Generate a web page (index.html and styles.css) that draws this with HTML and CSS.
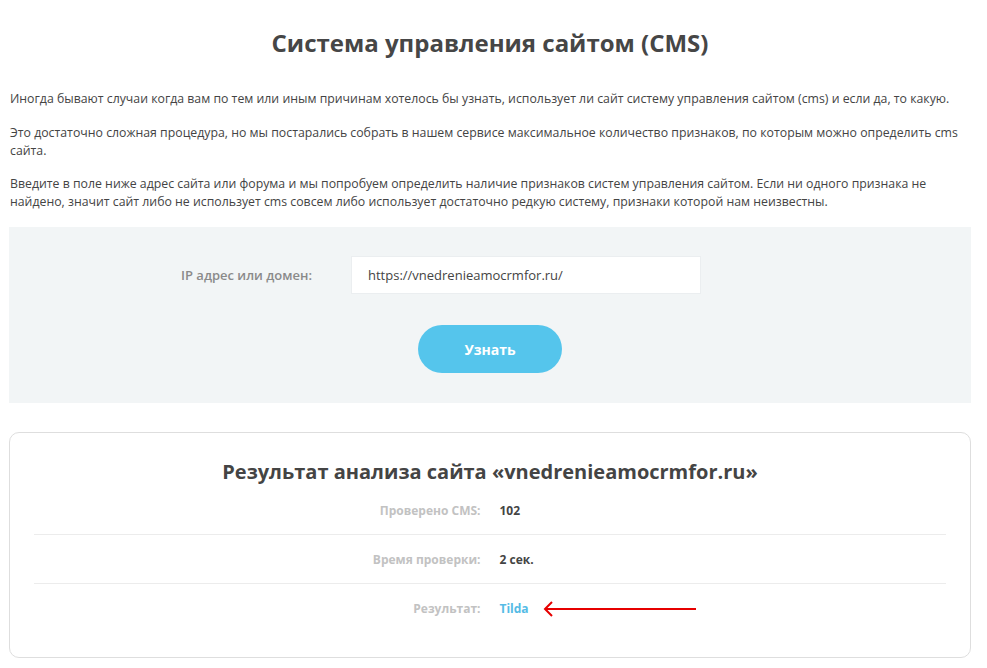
FILE: index.html
```html
<!DOCTYPE html>
<html lang="ru">
<head>
    <meta charset="UTF-8">
    <title>Система управления сайтом (CMS)</title>
    <link rel="stylesheet" href="styles.css">
</head>
<body>
    <main class="container">
        <h1>Система управления сайтом (CMS)</h1>

        <div class="intro">
            <p>Иногда бывают случаи когда вам по тем или иным причинам хотелось бы узнать, использует ли сайт систему управления сайтом (cms) и если да, то какую.</p>
            <p>Это достаточно сложная процедура, но мы постарались собрать в нашем сервисе максимальное количество признаков, по которым можно определить cms сайта.</p>
            <p>Введите в поле ниже адрес сайта или форума и мы попробуем определить наличие признаков систем управления сайтом. Если ни одного признака не найдено, значит сайт либо не использует cms совсем либо использует достаточно редкую систему, признаки которой нам неизвестны.</p>
        </div>

        <form class="check-form">
            <div class="field">
                <label for="domain">IP адрес или домен:</label>
                <input type="text" id="domain" value="https://vnedrenieamocrmfor.ru/">
            </div>
            <button type="button" class="btn-check">Узнать</button>
        </form>

        <section class="result">
            <h2>Результат анализа сайта «vnedrenieamocrmfor.ru»</h2>
            <div class="result-row">
                <span class="result-label">Проверено CMS:</span>
                <span class="result-value">102</span>
            </div>
            <div class="result-row">
                <span class="result-label">Время проверки:</span>
                <span class="result-value">2 сек.</span>
            </div>
            <div class="result-row">
                <span class="result-label">Результат:</span>
                <span class="result-value">
                    <a href="#" class="cms-name">Tilda</a>
                    <svg class="arrow" width="156" height="16" viewBox="0 0 156 16">
                        <path d="M3 8 H154" stroke="#e60000" stroke-width="2" fill="none"/>
                        <path d="M10 1 L3 8 L10 15" stroke="#e60000" stroke-width="2" fill="none"/>
                    </svg>
                </span>
            </div>
        </section>
    </main>
</body>
</html>
```

FILE: styles.css
```css
body, h1, h2, p {
    margin: 0;
    padding: 0;
}

body {
    font-family: 'Open Sans', 'Noto Sans', sans-serif;
    color: #444;
    background: #fff;
}

.container {
    padding: 0 16px 0 9px;
}

h1 {
    text-align: center;
    font-size: 24px;
    font-weight: 700;
    color: #464646;
    padding-top: 27px;
    margin-bottom: 31px;
    line-height: 32px;
}

.intro {
    padding: 0 1px;
}

.intro p {
    font-size: 12.3px;
    line-height: 18px;
    color: #444;
    margin-bottom: 15.5px;
}

.check-form {
    background: #f2f5f6;
    margin-top: 16px;
    padding: 29px 0 30px;
    display: flex;
    flex-direction: column;
    align-items: center;
}

.field {
    display: flex;
    align-items: center;
    margin-left: -98px;
}

.field label {
    font-size: 13px;
    font-weight: 600;
    color: #8a8a8a;
    width: 137px;
    margin-right: 33px;
}

.field input {
    width: 350px;
    height: 38px;
    box-sizing: border-box;
    border: 1px solid #ebeef0;
    background: #fff;
    padding: 0 16px;
    font-family: 'Open Sans', 'Noto Sans', sans-serif;
    font-size: 13px;
    color: #444;
    outline: none;
}

.btn-check {
    margin-top: 31px;
    width: 144px;
    height: 48px;
    border: none;
    border-radius: 24px;
    background: #55c5ec;
    color: #fff;
    font-family: 'Open Sans', 'Noto Sans', sans-serif;
    font-size: 14px;
    font-weight: 700;
    cursor: pointer;
}

.result {
    margin-top: 29px;
    border: 1px solid #dedede;
    border-radius: 10px;
    padding: 25px 24px 24px;
}

.result h2 {
    text-align: center;
    font-size: 20px;
    font-weight: 700;
    color: #444;
    line-height: 28px;
}

.result-row {
    display: grid;
    grid-template-columns: 1fr 1fr;
    column-gap: 19px;
    align-items: center;
    height: 49px;
    box-sizing: border-box;
    border-bottom: 1px solid #ececec;
    font-size: 12px;
    font-weight: 700;
}

.result-row:last-child {
    border-bottom: none;
}

.result-label {
    text-align: right;
    color: #c2c2c2;
}

.result-value {
    color: #444;
    display: flex;
    align-items: center;
}

.cms-name {
    color: #55bbe5;
    text-decoration: none;
}

.arrow {
    margin-left: 13px;
}
```
